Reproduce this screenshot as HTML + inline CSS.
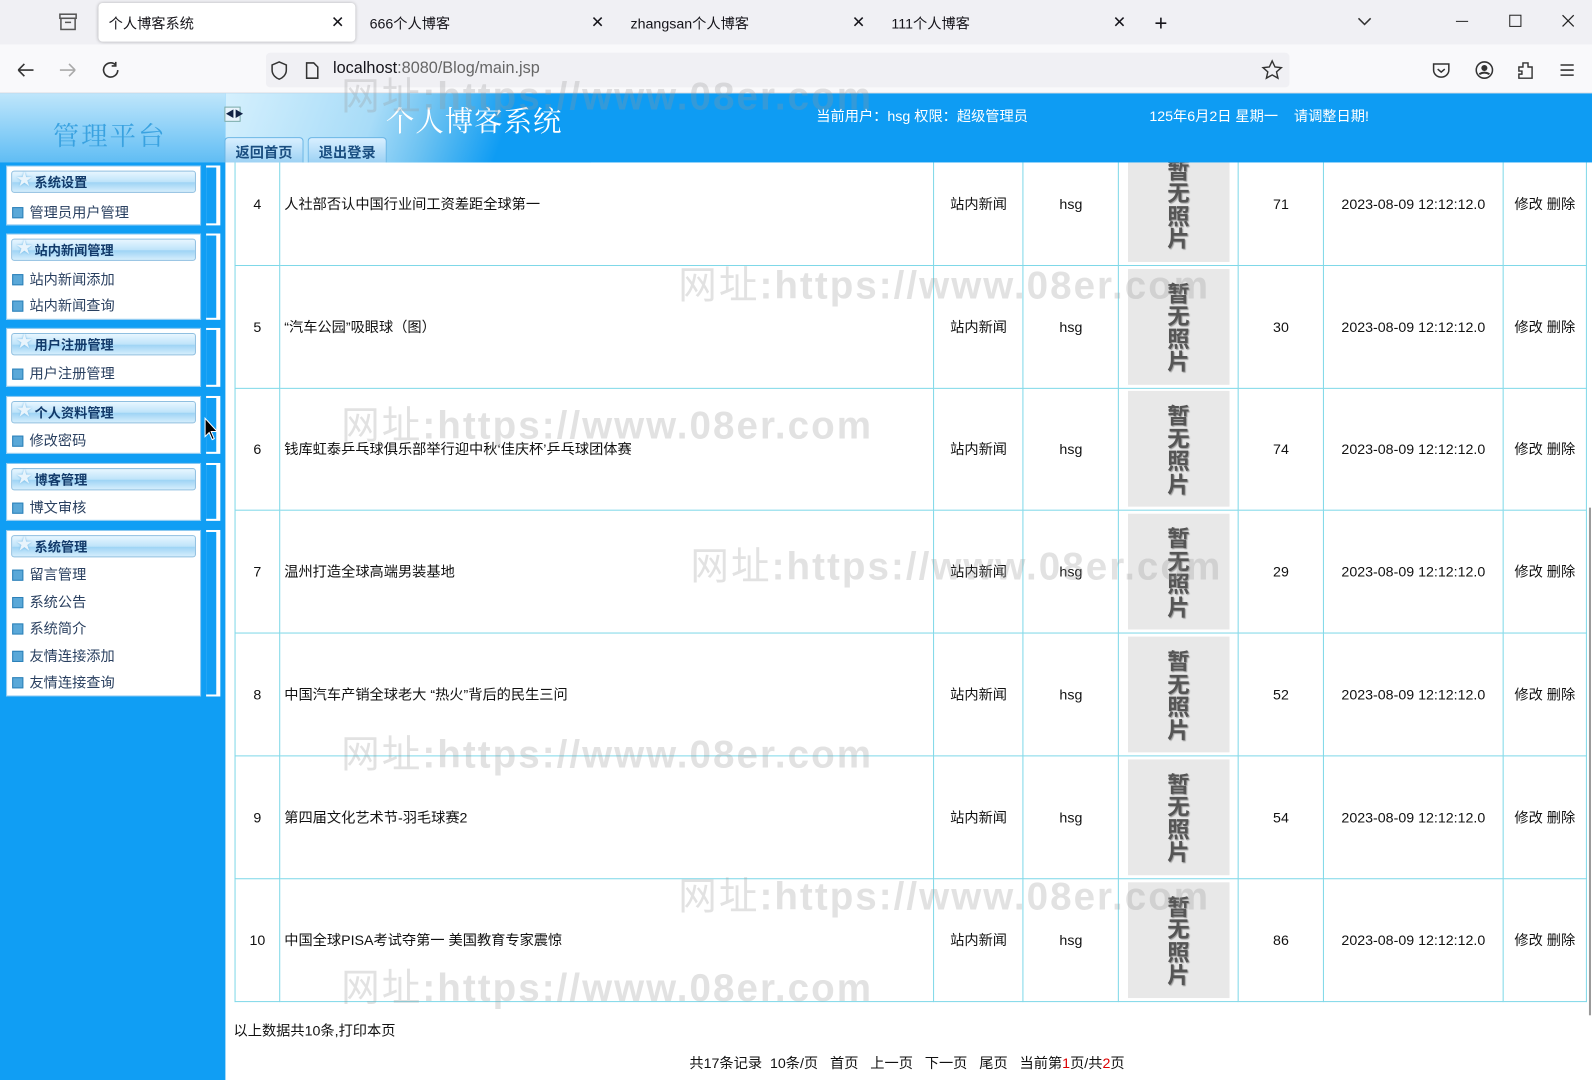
<!DOCTYPE html>
<html><head><meta charset="utf-8">
<style>
*{margin:0;padding:0;box-sizing:border-box}
html,body{width:1592px;height:1080px;overflow:hidden}
body{position:relative;background:#fff;font-family:"Liberation Sans","Noto Sans CJK SC",sans-serif;font-size:14px;color:#111}
#wrap{position:absolute;left:0;top:0;width:1568px;height:1064px;transform:scale(1.0153);transform-origin:0 0;overflow:hidden}
.abs{position:absolute}
.tabbar{left:0;top:0;width:1592px;height:44px;background:#f0f0f4}
.tab{top:4px;height:38px;font-size:14px;line-height:38px;color:#15141a}
.addr{left:0;top:44px;width:1592px;height:48px;background:#f9f9fb;border-bottom:1px solid #e0e0e6}
.urlbox{left:262px;top:52px;width:1008px;height:34px;background:#f0f0f4;border-radius:4px}
.side{left:0;top:92px;width:222px;height:988px;background:#109ef4}
.hdr{left:222px;top:92px;width:1370px;height:68px;background:#0e9cf3}
.panel{left:6px;width:192px;background:#fff;border:1px solid #8cc8f0}
.ph{position:absolute;left:4px;top:4px;width:182px;height:22px;border:1px solid #8fbfe0;border-radius:3px;background:linear-gradient(#e8f6ff,#bfe4fa 50%,#9fd4f5 55%,#d5eefc);font-weight:bold;font-size:13px;color:#123a6a;line-height:22px;padding-left:22px}
.ph:before{content:"★";position:absolute;left:4px;top:-2px;color:#e8f4fc;font-size:16px;text-shadow:0 0 2px #6bb4e4}
.it{position:absolute;left:5px;font-size:14px;color:#2a4060}
.it:before{content:"";display:inline-block;width:9px;height:9px;background:#5aa8d8;border:1px solid #2c80b8;margin-right:6px;vertical-align:-1px}
.brk{left:203px;width:14px;background:#fff}
.brk:after{content:"";position:absolute;left:0;top:2px;bottom:2px;width:10px;background:#109ef4}
table{position:absolute;border-collapse:collapse;width:1332px}
td{border:1px solid #7fd8e8;height:120.8px;text-align:center;font-size:14px}
td.t{text-align:left;padding-left:4px}
.ph2{width:100px;height:114px;background:#e8e8e8;margin:0 auto;font-weight:bold;font-size:22px;line-height:22.5px;color:#555;padding-top:12px;text-shadow:1px 1px 1px #999;font-family:"Noto Sans CJK SC",sans-serif}
.wm{position:absolute;font-size:38px;font-weight:bold;color:rgba(150,150,150,0.28);letter-spacing:2px;white-space:nowrap}
.wm span{font-weight:normal}
</style></head><body><div id="wrap">
<div class="abs tabbar"></div>
<svg class="abs" style="left:56px;top:11px" width="22" height="22" viewBox="0 0 22 22"><rect x="3" y="3" width="16" height="4" fill="none" stroke="#555" stroke-width="1.5"/><rect x="4" y="7" width="14" height="11" fill="none" stroke="#555" stroke-width="1.5"/><line x1="8" y1="11" x2="14" y2="11" stroke="#555" stroke-width="1.5"/></svg>
<div class="abs" style="left:97px;top:3px;width:253px;height:38px;background:#fff;border-radius:4px;box-shadow:0 0 3px rgba(0,0,0,.25)"></div>
<div class="abs tab" style="left:107px">个人博客系统</div><div class="abs tab" style="left:326px;font-size:16px">✕</div>
<div class="abs tab" style="left:364px">666个人博客</div><div class="abs tab" style="left:582px;font-size:16px">✕</div>
<div class="abs tab" style="left:621px">zhangsan个人博客</div><div class="abs tab" style="left:839px;font-size:16px">✕</div>
<div class="abs tab" style="left:878px">111个人博客</div><div class="abs tab" style="left:1096px;font-size:16px">✕</div>
<div class="abs tab" style="left:1137px;font-size:22px">+</div>
<svg class="abs" style="left:1336px;top:14px" width="16" height="14"><polyline points="2,4 8,10 14,4" fill="none" stroke="#333" stroke-width="1.5"/></svg>
<svg class="abs" style="left:1432px;top:12px" width="130" height="18"><line x1="2" y1="9" x2="14" y2="9" stroke="#222"/><rect x="55" y="3" width="11" height="11" fill="none" stroke="#222"/><path d="M107 3 L118 14 M118 3 L107 14" stroke="#222" stroke-width="1.2"/></svg>
<div class="abs addr"></div>
<svg class="abs" style="left:14px;top:58px" width="110" height="22"><path d="M4 11 H19 M4 11 L10 5 M4 11 L10 17" stroke="#333" stroke-width="1.6" fill="none"/><path d="M45 11 H60 M60 11 L54 5 M60 11 L54 17" stroke="#aaa" stroke-width="1.6" fill="none"/><path d="M100 6 A7 7 0 1 0 102 11 M100 3 V7 H96" stroke="#333" stroke-width="1.6" fill="none"/></svg>
<div class="abs urlbox"></div>
<svg class="abs" style="left:264px;top:58px" width="56" height="22"><path d="M11 3 L18 6 V11 C18 16 14 19 11 20 C8 19 4 16 4 11 V6 Z" fill="none" stroke="#333" stroke-width="1.5"/><path d="M38 4 H45 L49 8 V19 H38 Z" fill="none" stroke="#333" stroke-width="1.5"/></svg>
<div class="abs" style="left:328px;top:59px;font-size:16px;color:#15141a">localhost<span style="color:#666">:8080/Blog/main.jsp</span></div>
<svg class="abs" style="left:1242px;top:58px" width="22" height="22"><path d="M11 2 L13.8 8 L20 8.6 L15.3 12.8 L16.7 19 L11 15.8 L5.3 19 L6.7 12.8 L2 8.6 L8.2 8 Z" fill="none" stroke="#333" stroke-width="1.4"/></svg>
<svg class="abs" style="left:1408px;top:58px" width="150" height="22"><path d="M4 5 H19 V11 A7.5 7 0 0 1 4 11 Z" fill="none" stroke="#333" stroke-width="1.5"/><polyline points="8,10 11.5,13 15,10" fill="none" stroke="#333" stroke-width="1.5"/><circle cx="54" cy="11" r="8" fill="none" stroke="#333" stroke-width="1.5"/><circle cx="54" cy="9" r="3" fill="#333"/><path d="M49 15 Q54 12 59 15" stroke="#333" stroke-width="2" fill="none"/><path d="M88 8 H92 V4 H97 V8 H101 V19 H88 V15 H91 V12 H88 Z" fill="none" stroke="#333" stroke-width="1.4"/><path d="M129 6 H142 M129 11 H142 M129 16 H142" stroke="#333" stroke-width="1.5"/></svg>

<div class="abs side"></div>
<div class="abs" style="left:0;top:92px;width:222px;height:68px;background:linear-gradient(#bfe6fb,#60bdf4)"></div>
<div class="abs" style="left:52px;top:114px;font-size:26px;color:#3aa2e0;font-family:'Noto Serif CJK SC',serif;letter-spacing:2px">管理平台</div>
<div class="abs hdr"></div>
<div class="abs" style="left:222px;top:92px;width:360px;height:68px;background:linear-gradient(110deg,#d5f0fd 0%,#a8dcf8 40%,#6cc2f2 55%,#0e9cf3 75%)"></div>
<div class="abs" style="left:221px;top:105px;width:16px;height:15px;background:#e8f4fc;border:1px solid #7aa;font-size:9px;line-height:13px;text-align:center;color:#124">◀▶</div>
<div class="abs" style="left:380px;top:98px;font-size:28px;color:#fff;font-family:'Noto Serif CJK SC',serif;letter-spacing:1px">个人博客系统</div>
<div class="abs" style="left:221px;top:135px;width:78px;height:25px;background:linear-gradient(#d8efff,#9dd2f4);border:1px solid #69b4e4;border-bottom:none;border-radius:4px 4px 0 0;font-weight:bold;font-size:14px;color:#1a4e80;text-align:center;line-height:28px">返回首页</div>
<div class="abs" style="left:303px;top:135px;width:78px;height:25px;background:linear-gradient(#d8efff,#9dd2f4);border:1px solid #69b4e4;border-bottom:none;border-radius:4px 4px 0 0;font-weight:bold;font-size:14px;color:#1a4e80;text-align:center;line-height:28px">退出登录</div>
<div class="abs" style="left:804px;top:104px;color:#fff;font-size:14px">当前用户：hsg 权限：超级管理员</div>
<div class="abs" style="left:1132px;top:104px;color:#fff;font-size:14px">125年6月2日 星期一&nbsp;&nbsp;&nbsp;&nbsp;请调整日期!</div>

<div class="abs panel" style="top:163px;height:59px"><div class="ph">系统设置</div><div class="it" style="top:35px">管理员用户管理</div></div>
<div class="abs brk" style="top:163px;height:59px"></div>
<div class="abs panel" style="top:230px;height:85px"><div class="ph">站内新闻管理</div><div class="it" style="top:34px">站内新闻添加</div><div class="it" style="top:60px">站内新闻查询</div></div>
<div class="abs brk" style="top:230px;height:85px"></div>
<div class="abs panel" style="top:323px;height:58px"><div class="ph">用户注册管理</div><div class="it" style="top:34px">用户注册管理</div></div>
<div class="abs brk" style="top:323px;height:58px"></div>
<div class="abs panel" style="top:390px;height:57px"><div class="ph">个人资料管理</div><div class="it" style="top:33px">修改密码</div></div>
<div class="abs brk" style="top:390px;height:57px"></div>
<div class="abs panel" style="top:456px;height:57px"><div class="ph">博客管理</div><div class="it" style="top:33px">博文审核</div></div>
<div class="abs brk" style="top:456px;height:57px"></div>
<div class="abs panel" style="top:522px;height:164px"><div class="ph">系统管理</div><div class="it" style="top:33px">留言管理</div><div class="it" style="top:60px">系统公告</div><div class="it" style="top:86px">系统简介</div><div class="it" style="top:113px">友情连接添加</div><div class="it" style="top:139px">友情连接查询</div></div>
<div class="abs brk" style="top:522px;height:164px"></div>
<svg class="abs" style="left:200px;top:410px" width="16" height="26"><path d="M2 2 L2 20 L6 16 L9 23 L11 22 L8 15 L14 15 Z" fill="#000" stroke="#fff" stroke-width="1"/></svg>

<div class="abs" style="left:222px;top:160px;width:1346px;height:920px;overflow:hidden">
<table style="left:9px;top:-20px">
<colgroup><col style="width:44px"><col style="width:645px"><col style="width:88px"><col style="width:94px"><col style="width:118px"><col style="width:84px"><col style="width:177px"><col style="width:82px"></colgroup>
<tr><td>4</td><td class="t">人社部否认中国行业间工资差距全球第一</td><td>站内新闻</td><td>hsg</td><td><div class="ph2">暂<br>无<br>照<br>片</div></td><td>71</td><td>2023-08-09 12:12:12.0</td><td>修改 删除</td></tr>
<tr><td>5</td><td class="t">“汽车公园”吸眼球（图）</td><td>站内新闻</td><td>hsg</td><td><div class="ph2">暂<br>无<br>照<br>片</div></td><td>30</td><td>2023-08-09 12:12:12.0</td><td>修改 删除</td></tr>
<tr><td>6</td><td class="t">钱库虹泰乒乓球俱乐部举行迎中秋‘佳庆杯’乒乓球团体赛</td><td>站内新闻</td><td>hsg</td><td><div class="ph2">暂<br>无<br>照<br>片</div></td><td>74</td><td>2023-08-09 12:12:12.0</td><td>修改 删除</td></tr>
<tr><td>7</td><td class="t">温州打造全球高端男装基地</td><td>站内新闻</td><td>hsg</td><td><div class="ph2">暂<br>无<br>照<br>片</div></td><td>29</td><td>2023-08-09 12:12:12.0</td><td>修改 删除</td></tr>
<tr><td>8</td><td class="t">中国汽车产销全球老大 “热火”背后的民生三问</td><td>站内新闻</td><td>hsg</td><td><div class="ph2">暂<br>无<br>照<br>片</div></td><td>52</td><td>2023-08-09 12:12:12.0</td><td>修改 删除</td></tr>
<tr><td>9</td><td class="t">第四届文化艺术节-羽毛球赛2</td><td>站内新闻</td><td>hsg</td><td><div class="ph2">暂<br>无<br>照<br>片</div></td><td>54</td><td>2023-08-09 12:12:12.0</td><td>修改 删除</td></tr>
<tr><td>10</td><td class="t">中国全球PISA考试夺第一 美国教育专家震惊</td><td>站内新闻</td><td>hsg</td><td><div class="ph2">暂<br>无<br>照<br>片</div></td><td>86</td><td>2023-08-09 12:12:12.0</td><td>修改 删除</td></tr>
</table>
<div class="abs" style="left:8px;top:845px;font-size:14px">以上数据共10条,打印本页</div>
<div class="abs" style="left:457px;top:877px;font-size:14px;white-space:pre">共17条记录  10条/页   首页   上一页   下一页   尾页   当前第<span style="color:#d00">1</span>页/共<span style="color:#d00">2</span>页</div>
</div>
<div class="abs" style="left:1568px;top:160px;width:24px;height:920px;background:#fff"></div>
<div class="abs" style="left:1565px;top:500px;width:2px;height:500px;background:#999"></div>

<div class="wm" style="left:336px;top:64px"><span>网址</span>:https://www.08er.com</div>
<div class="wm" style="left:668px;top:250px"><span>网址</span>:https://www.08er.com</div>
<div class="wm" style="left:336px;top:388px"><span>网址</span>:https://www.08er.com</div>
<div class="wm" style="left:680px;top:527px"><span>网址</span>:https://www.08er.com</div>
<div class="wm" style="left:336px;top:712px"><span>网址</span>:https://www.08er.com</div>
<div class="wm" style="left:668px;top:852px"><span>网址</span>:https://www.08er.com</div>
<div class="wm" style="left:336px;top:942px"><span>网址</span>:https://www.08er.com</div>
</div></body></html>
